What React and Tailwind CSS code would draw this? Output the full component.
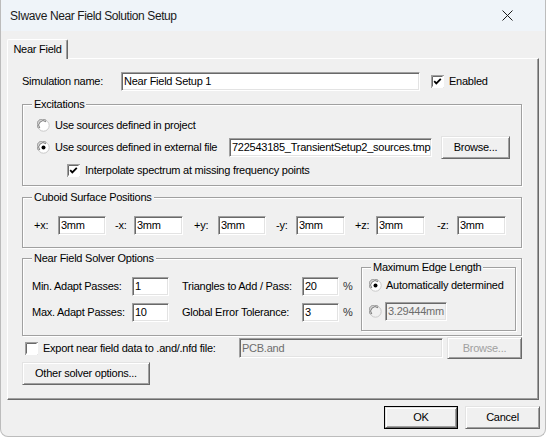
const sunken =
  'border border-t-[#a0a0a0] border-l-[#a0a0a0] border-r-white border-b-white shadow-[inset_1px_1px_0_#696969,inset_-1px_-1px_0_#e3e3e3]';
const raised =
  'border border-t-[#e3e3e3] border-l-[#e3e3e3] border-r-[#696969] border-b-[#696969] shadow-[inset_1px_1px_0_#fff,inset_-1px_-1px_0_#a0a0a0]';

const TextBox = ({ w, h = 19, value, disabled }) => (
  <div
    className={`${sunken} flex items-center pl-[2px] overflow-hidden whitespace-nowrap ${
      disabled ? 'bg-[#f0f0f0] text-[#6d6d6d]' : 'bg-white text-black'
    } ${w} ${h === 20 ? 'h-[20px]' : 'h-[19px]'}`}
  >
    {value}
  </div>
);

const Button = ({ className, children, isDefault, disabled }) => (
  <div className={`${isDefault ? 'border border-black' : ''} ${className}`}>
    <div
      className={`${raised} h-full w-full flex items-center justify-center bg-[#f0f0f0] ${
        disabled ? 'text-[#a0a0a0]' : 'text-black'
      }`}
    >
      {children}
    </div>
  </div>
);

const Radio = ({ checked, disabled }) => (
  <svg width="13" height="13" viewBox="0 0 13 13" className="shrink-0">
    <circle cx="6.5" cy="6.5" r="5.7" fill={disabled ? '#f0f0f0' : '#fff'} stroke="#c8c8c8" strokeWidth="1" />
    <path d="M1.6 9.3 A5.4 5.4 0 0 1 9.3 1.6" fill="none" stroke="#8a8a8a" strokeWidth="1" />
    <path d="M2.8 9 A4.4 4.4 0 0 1 9 2.8" fill="none" stroke="#5a5a5a" strokeWidth="0.8" />
    {checked && <circle cx="6.5" cy="6.5" r="2" fill="#000" />}
  </svg>
);

const Check = ({ checked }) => (
  <svg width="13" height="13" viewBox="0 0 13 13" className="shrink-0">
    <rect x="0.5" y="0.5" width="12" height="12" fill="#fff" stroke="#a0a0a0" />
    <path d="M1.5 11.5 V1.5 H11.5" fill="none" stroke="#696969" />
    <path d="M1 12.5 H12.5 V1" fill="none" stroke="#fff" />
    {checked && (
      <path d="M3.2 6.2 L5.3 8.4 L9.8 3.8" fill="none" stroke="#000" strokeWidth="1.8" />
    )}
  </svg>
);

const Group = ({ label, className, children }) => (
  <div
    className={`flex flex-col border border-[#a0a0a0] shadow-[inset_1px_1px_0_#fff,1px_1px_0_#fff] ${className}`}
  >
    <span className="-mt-[8px] ml-[9px] self-start bg-[#f0f0f0] px-[2px] leading-[14px]">
      {label}
    </span>
    {children}
  </div>
);

const CUBOID = [
  { label: '+x:', ml: 'ml-[11px]', lw: 'w-[24px]', iw: 'w-[48px]' },
  { label: '-x:', ml: 'ml-[9px]', lw: 'w-[19px]', iw: 'w-[49px]' },
  { label: '+y:', ml: 'ml-[11px]', lw: 'w-[24px]', iw: 'w-[48px]' },
  { label: '-y:', ml: 'ml-[10px]', lw: 'w-[20px]', iw: 'w-[49px]' },
  { label: '+z:', ml: 'ml-[10px]', lw: 'w-[21px]', iw: 'w-[49px]' },
  { label: '-z:', ml: 'ml-[12px]', lw: 'w-[20px]', iw: 'w-[49px]' },
];

export default function App() {
  return (
    <div className="w-[546px] h-[437px] flex flex-col bg-[#f0f0f0] border-x border-b border-[#bcbcbc] rounded-b-[8px] overflow-hidden font-['Liberation_Sans',Arial,sans-serif] text-[11px] tracking-[-0.25px] text-black">
      {/* title bar */}
      <div className="h-[31px] shrink-0 flex items-center justify-between bg-[#eff4f9] pl-[9px] pr-[32px]">
        <span className="text-[12px] tracking-[-0.4px] text-[#1a1a1a]">SIwave Near Field Solution Setup</span>
        <svg width="11" height="11" viewBox="0 0 11 11">
          <path d="M0.5 0.5 L10.5 10.5 M10.5 0.5 L0.5 10.5" stroke="#1a1a1a" strokeWidth="1" />
        </svg>
      </div>

      <div className="flex flex-col pl-[6px] pt-[8px]">
        {/* tab */}
        <div className="relative z-10 -mb-px w-[61px] h-[20px] flex items-center justify-center bg-[#f0f0f0] border-t border-l border-r border-t-white border-l-white border-r-[#696969] rounded-t-[2px] shadow-[inset_-1px_0_0_#a0a0a0]">
          Near Field
        </div>

        {/* tab page */}
        <div className="w-[532px] h-[342px] flex flex-col pl-[14px] pt-[13px] border border-t-white border-l-white border-r-[#696969] border-b-[#696969] shadow-[inset_-1px_-1px_0_#a0a0a0]">
          <div className="h-[19px] flex items-center">
            <span className="w-[99px]">Simulation name:</span>
            <TextBox w="w-[299px]" value="Near Field Setup 1" />
            <div className="ml-[11px]">
              <Check checked />
            </div>
            <span className="ml-[5px]">Enabled</span>
          </div>

          <Group label="Excitations" className="mt-[13px] w-[500px] h-[82px]">
            <div className="mt-[7px] ml-[14px] h-[14px] flex items-center">
              <Radio />
              <span className="ml-[5px]">Use sources defined in project</span>
            </div>
            <div className="mt-[4px] ml-[14px] h-[23px] flex items-center">
              <Radio checked />
              <span className="ml-[5px] w-[174px] whitespace-nowrap">Use sources defined in external file</span>
              <TextBox w="w-[203px]" value="722543185_TransientSetup2_sources.tmp" />
              <Button className="ml-[9px] w-[69px] h-[23px]">Browse...</Button>
            </div>
            <div className="mt-[4px] ml-[44px] h-[14px] flex items-center">
              <Check checked />
              <span className="ml-[5px]">Interpolate spectrum at missing frequency points</span>
            </div>
          </Group>

          <Group label="Cuboid Surface Positions" className="mt-[11px] w-[500px] h-[51px]">
            <div className="mt-[12px] h-[19px] flex items-center">
              {CUBOID.map((c) => (
                <div key={c.label} className={`flex items-center ${c.ml}`}>
                  <span className={c.lw}>{c.label}</span>
                  <TextBox w={c.iw} value="3mm" />
                </div>
              ))}
            </div>
          </Group>

          <Group label="Near Field Solver Options" className="mt-[10px] w-[500px] h-[78px]">
            <div className="flex items-start">
              <div className="flex flex-col pl-[9px] pt-[12px] gap-[7px]">
                <div className="h-[19px] flex items-center">
                  <span className="w-[100px]">Min. Adapt Passes:</span>
                  <TextBox w="w-[37px]" value="1" />
                  <span className="ml-[13px] w-[120px]">Triangles to Add / Pass:</span>
                  <TextBox w="w-[37px]" value="20" />
                  <span className="ml-[4px] text-[#333]">%</span>
                </div>
                <div className="h-[19px] flex items-center">
                  <span className="w-[100px]">Max. Adapt Passes:</span>
                  <TextBox w="w-[37px]" value="10" />
                  <span className="ml-[13px] w-[120px]">Global Error Tolerance:</span>
                  <TextBox w="w-[37px]" value="3" />
                  <span className="ml-[4px] text-[#333]">%</span>
                </div>
              </div>
              <Group label="Maximum Edge Length" className="mt-[2px] ml-auto mr-[5px] w-[155px] h-[64px]">
                <div className="mt-[4px] ml-[7px] h-[14px] flex items-center">
                  <Radio checked />
                  <span className="ml-[4px]">Automatically determined</span>
                </div>
                <div className="mt-[10px] ml-[7px] h-[19px] flex items-center">
                  <Radio disabled />
                  <div className="ml-[3px]">
                    <TextBox w="w-[62px]" value="3.29444mm" disabled />
                  </div>
                </div>
              </Group>
            </div>
          </Group>

          <div className="mt-[1px] h-[22px] flex items-center">
            <div className="ml-[3px]">
              <Check />
            </div>
            <span className="ml-[5px] w-[196px]">Export near field data to .and/.nfd file:</span>
            <TextBox w="w-[204px]" h={20} value="PCB.and" disabled />
            <Button className="ml-[4px] w-[75px] h-[22px]" disabled>
              Browse...
            </Button>
          </div>

          <Button className="mt-[3px] w-[128px] h-[23px]">Other solver options...</Button>
        </div>

        {/* dialog buttons */}
        <div className="mt-[6px] w-[533px] flex justify-end gap-[7px]">
          <Button isDefault className="w-[74px] h-[23px]">
            OK
          </Button>
          <Button className="w-[75px] h-[23px]">Cancel</Button>
        </div>
      </div>
    </div>
  );
}
